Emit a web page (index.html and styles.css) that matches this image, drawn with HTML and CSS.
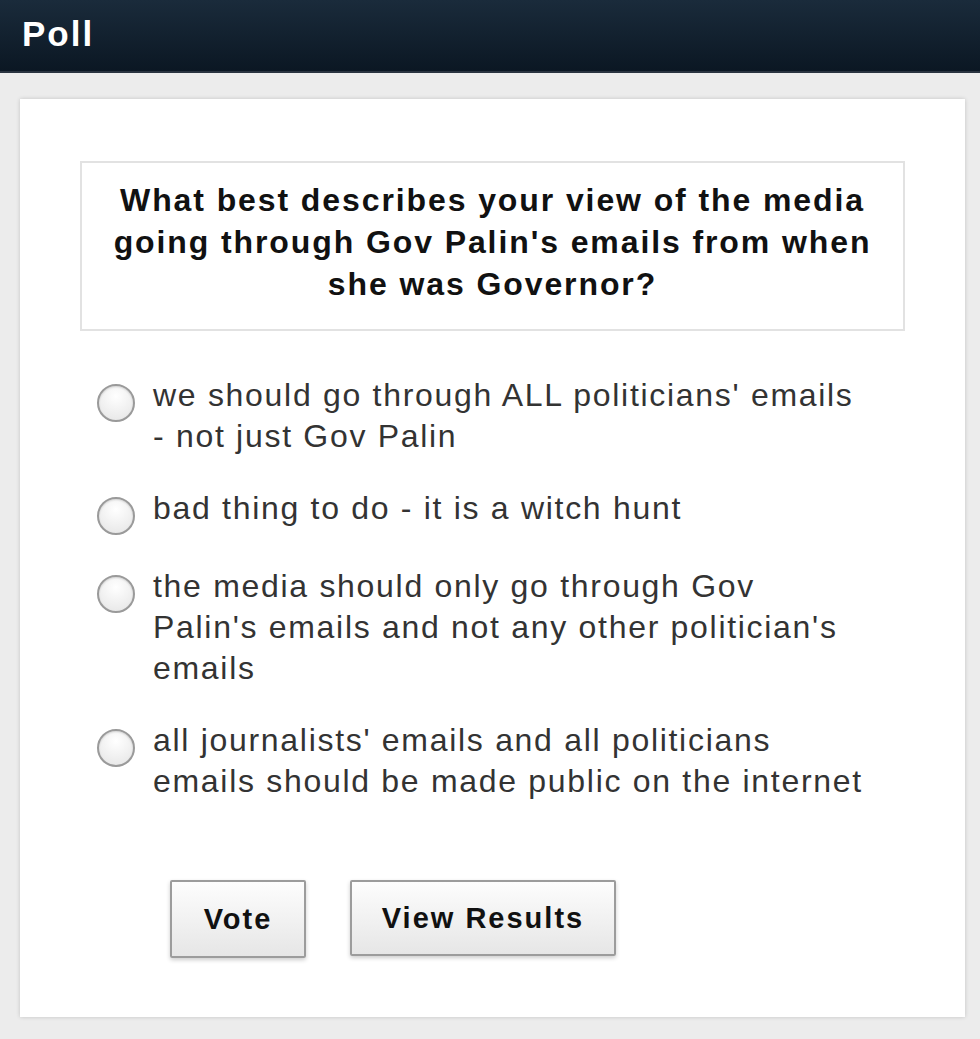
FILE: index.html
```html
<!DOCTYPE html>
<html>
<head>
<meta charset="utf-8">
<link rel="stylesheet" href="styles.css">
</head>
<body>
<div class="header"><span class="title">Poll</span></div>
<div class="wrap">
  <div class="panel">
    <div class="question">What best describes your view of the media going through Gov Palin's emails from when she was Governor?</div>
    <div class="options">
      <label class="opt"><span class="radio"></span><span class="txt">we should go through ALL politicians' emails - not just Gov Palin</span></label>
      <label class="opt"><span class="radio"></span><span class="txt">bad thing to do - it is a witch hunt</span></label>
      <label class="opt"><span class="radio"></span><span class="txt">the media should only go through Gov Palin's emails and not any other politician's emails</span></label>
      <label class="opt"><span class="radio"></span><span class="txt">all journalists' emails and all politicians emails should be made public on the internet</span></label>
    </div>
    <div class="buttons">
      <button class="btn vote">Vote</button>
      <button class="btn results">View Results</button>
    </div>
  </div>
</div>
</body>
</html>
```
FILE: styles.css
```css
html, body {
  margin: 0;
  padding: 0;
  background: #ececec;
  font-family: "Liberation Sans", Arial, sans-serif;
}
.header {
  height: 73px;
  background: linear-gradient(#1a2b3b, #0b1723);
  display: flex;
  align-items: center;
  padding-left: 22px;
  box-sizing: border-box;
  border-bottom: 2px solid #2a3440;
}
.title {
  color: #fff;
  font-weight: bold;
  font-size: 35px;
  letter-spacing: 2px;
  margin-top: -3px;
}
.wrap {
  padding: 26px 15px 20px 20px;
}
.panel {
  background: #fff;
  width: 945px;
  height: 918px;
  box-sizing: border-box;
  box-shadow: 0 0 4px rgba(0,0,0,0.18);
  padding: 62px 60px 0 60px;
}
.question {
  width: 825px;
  border: 2px solid #e2e2e2;
  box-sizing: border-box;
  padding: 16px 12px 24px;
  text-align: center;
  font-weight: bold;
  font-size: 32px;
  letter-spacing: 1.9px;
  line-height: 42px;
  color: #111;
}
.options {
  margin-top: 44px;
  display: flex;
  flex-direction: column;
  gap: 31px;
}
.opt {
  display: flex;
  align-items: flex-start;
  gap: 18px;
  padding-left: 17px;
}
.radio {
  flex: 0 0 auto;
  width: 34px;
  height: 34px;
  border-radius: 50%;
  border: 2px solid #9a9a9a;
  background: radial-gradient(circle at 50% 30%, #fff, #e4e4e4);
  margin-top: 9px;
  box-shadow: inset 0 1px 2px rgba(0,0,0,0.15);
}
.txt {
  font-size: 32px;
  letter-spacing: 1.7px;
  line-height: 41px;
  color: #333;
  width: 714px;
}
.buttons {
  margin-top: 78px;
  padding-left: 90px;
  display: flex;
  gap: 44px;
  align-items: flex-start;
}
.btn {
  font-family: "Liberation Sans", Arial, sans-serif;
  font-weight: bold;
  font-size: 29px;
  letter-spacing: 2px;
  color: #111;
  background: linear-gradient(#fdfdfd, #e6e6e6);
  border: 2px solid #9c9c9c;
  border-radius: 2px;
  box-shadow: 0 2px 4px rgba(0,0,0,0.2);
  height: 78px;
  padding: 0;
}
.vote { width: 136px; }
.results { width: 266px; height: 76px; }
```
